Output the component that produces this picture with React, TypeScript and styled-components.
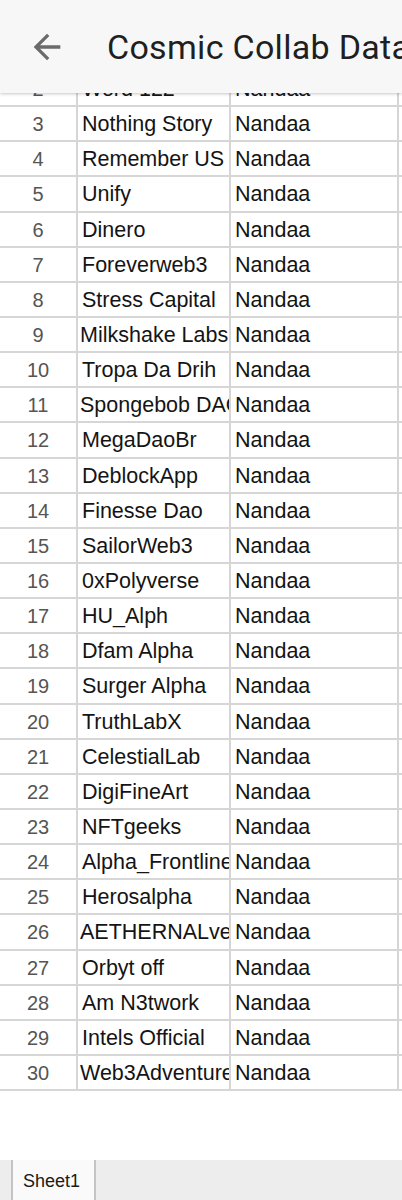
import React from "react";
import styled, { createGlobalStyle } from "styled-components";

const GlobalStyle = createGlobalStyle`
  html, body {
    margin: 0;
    padding: 0;
    background: #ffffff;
  }
  body {
    width: 402px;
    height: 1200px;
    overflow: hidden;
    font-family: "Liberation Sans", Arial, sans-serif;
  }
`;

const Page = styled.div`
  width: 402px;
  height: 1200px;
  display: flex;
  flex-direction: column;
  background: #ffffff;
  overflow: hidden;
`;

const Header = styled.header`
  position: relative;
  z-index: 2;
  flex: 0 0 93px;
  height: 93px;
  display: flex;
  align-items: center;
  background: #f7f7f7;
  box-shadow: 0 1px 3px rgba(0, 0, 0, 0.22);
  white-space: nowrap;
  overflow: hidden;
`;

const BackButton = styled.button`
  flex: 0 0 auto;
  width: 40px;
  height: 40px;
  margin-left: 27px;
  margin-right: 40px;
  padding: 0;
  border: 0;
  background: transparent;
  display: flex;
  align-items: center;
  justify-content: center;
  color: #6b6b6b;
`;

const Title = styled.h1`
  margin: 0;
  font-family: "Roboto", "Open Sans", sans-serif;
  font-weight: 400;
  font-size: 34px;
  letter-spacing: 0.3px;
  color: #1f1f1f;
  white-space: nowrap;
`;

const Viewport = styled.div`
  flex: 0 0 auto;
  height: 1067px;
  overflow: hidden;
  position: relative;
  z-index: 1;
`;

const Grid = styled.div`
  margin-top: -21px;
  display: grid;
  grid-template-columns: 76px 151px 166px 1fr;
  grid-auto-rows: 33.15px;
  gap: 2px;
  padding-bottom: 2px;
  background: #d6d6d6;
`;

const NumCell = styled.div`
  background: #ffffff;
  display: flex;
  align-items: center;
  justify-content: center;
  padding-top: 2px;
  font-family: "Liberation Sans", Arial, sans-serif;
  font-size: 20px;
  color: #555555;
`;

const TextCell = styled.div<{ $tight?: boolean }>`
  background: #ffffff;
  display: flex;
  align-items: center;
  padding-top: 2px;
  padding-left: ${(p) => (p.$tight ? "2px" : "4px")};
  font-family: "Liberation Sans", Arial, sans-serif;
  font-size: 21.5px;
  color: #141414;
  white-space: nowrap;
  overflow: hidden;
`;

const EmptyCell = styled.div`
  background: #ffffff;
`;

const Spacer = styled.div`
  flex: 1 1 auto;
  background: #ffffff;
`;

const TabBar = styled.div`
  flex: 0 0 40px;
  height: 40px;
  display: flex;
  background: #ededed;
  padding-left: 11px;
`;

const Tab = styled.div`
  width: 85px;
  height: 40px;
  box-sizing: border-box;
  border-left: 2px solid #c4c4c4;
  border-right: 2px solid #c4c4c4;
  background: #fafafa;
  display: flex;
  align-items: center;
  padding-left: 10px;
  padding-top: 2px;
  font-family: "Liberation Sans", Arial, sans-serif;
  font-size: 18px;
  color: #1a1a1a;
`;

const rows: { n: number; name: string; tight?: boolean }[] = [
  { n: 2, name: "Word 122" },
  { n: 3, name: "Nothing Story" },
  { n: 4, name: "Remember US" },
  { n: 5, name: "Unify" },
  { n: 6, name: "Dinero" },
  { n: 7, name: "Foreverweb3" },
  { n: 8, name: "Stress Capital" },
  { n: 9, name: "Milkshake Labs", tight: true },
  { n: 10, name: "Tropa Da Drih" },
  { n: 11, name: "Spongebob DAO", tight: true },
  { n: 12, name: "MegaDaoBr" },
  { n: 13, name: "DeblockApp" },
  { n: 14, name: "Finesse Dao" },
  { n: 15, name: "SailorWeb3" },
  { n: 16, name: "0xPolyverse" },
  { n: 17, name: "HU_Alph" },
  { n: 18, name: "Dfam Alpha" },
  { n: 19, name: "Surger Alpha" },
  { n: 20, name: "TruthLabX" },
  { n: 21, name: "CelestialLab" },
  { n: 22, name: "DigiFineArt" },
  { n: 23, name: "NFTgeeks" },
  { n: 24, name: "Alpha_Frontline" },
  { n: 25, name: "Herosalpha" },
  { n: 26, name: "AETHERNALverse", tight: true },
  { n: 27, name: "Orbyt off" },
  { n: 28, name: "Am N3twork" },
  { n: 29, name: "Intels Official" },
  { n: 30, name: "Web3Adventures", tight: true },
];

export default function App() {
  return (
    <>
      <GlobalStyle />
      <Page>
        <Header>
          <BackButton aria-label="Back">
            <svg width="40" height="40" viewBox="0 0 24 24" fill="currentColor">
              <path d="M20 11H7.83l5.59-5.59L12 4l-8 8 8 8 1.41-1.41L7.83 13H20v-2z" />
            </svg>
          </BackButton>
          <Title>Cosmic Collab Data</Title>
        </Header>
        <Viewport>
          <Grid>
            {rows.map((r) => (
              <React.Fragment key={r.n}>
                <NumCell>{r.n}</NumCell>
                <TextCell $tight={r.tight}>{r.name}</TextCell>
                <TextCell>Nandaa</TextCell>
                <EmptyCell />
              </React.Fragment>
            ))}
          </Grid>
        </Viewport>
        <Spacer />
        <TabBar>
          <Tab>Sheet1</Tab>
        </TabBar>
      </Page>
    </>
  );
}
